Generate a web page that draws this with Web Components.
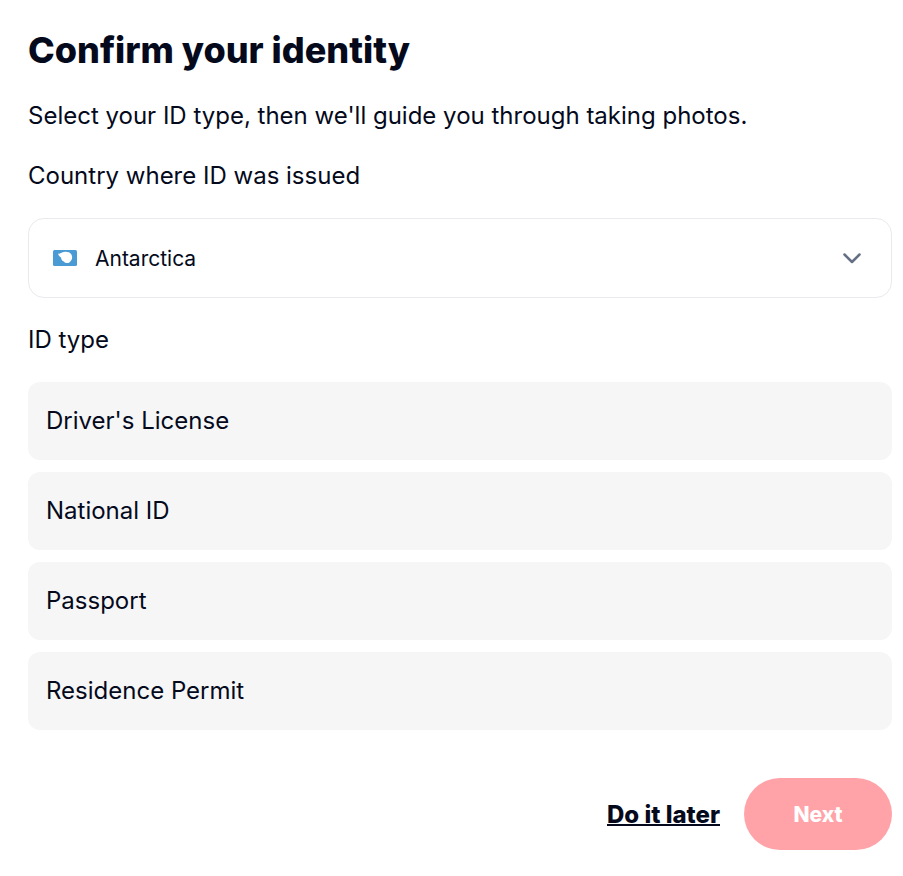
<!DOCTYPE html>
<html>
<head>
<meta charset="utf-8">
<style>
  html, body { margin: 0; background: #fff; }
  body { font-family: Inter, "Liberation Sans", sans-serif; color: #040a1c; }
</style>
</head>
<body>
<identity-page></identity-page>

<script>
// flag + name + chevron
var template_select = document.createElement("template");
template_select.innerHTML = `
<style>
  :host { display: flex; align-items: center; box-sizing: border-box; height: 80px; padding: 0 28px 0 24px; border: 1px solid #e8eaed; border-radius: 16px; background: #fff; font-size: 21px; }
  .flag { width: 24px; height: 16px; margin-right: 18px; flex: none; display: block; }
  .name { flex: 1; }
  .chev { width: 22px; height: 22px; display: block; }
</style>
<svg class="flag" viewBox="0 0 24 16">
  <rect width="24" height="16" rx="1.5" fill="#4a9bd4"/>
  <path fill="#ffffff" d="M5 3.6 C6.6 4 7.6 3 9 2.4 C12 1.2 16.4 1.6 18.2 4.2 C20 6.8 19.2 10.6 16.4 12.4 C14.4 13.6 12.2 13 10.8 11.4 C9.4 10.8 8 9.6 8.2 7.8 C7 6.8 5.4 5.4 5 3.6 Z"/>
</svg>
<span class="name"><slot></slot></span>
<svg class="chev" viewBox="0 0 22 22" fill="none" stroke="#667085" stroke-width="2.5" stroke-linecap="round" stroke-linejoin="round">
  <path d="M3.5 7.5 L11 15 L18.5 7.5"/>
</svg>
`;

class CountrySelect extends HTMLElement {
    constructor() {
        super();
        this.attachShadow({ mode: "open" });
    }
    connectedCallback() {
        this.shadowRoot.appendChild(template_select.content.cloneNode(true));
    }
}
customElements.define("country-select", CountrySelect);

var template_option = document.createElement("template");
template_option.innerHTML = `
<style>
  :host { display: flex; align-items: center; box-sizing: border-box; height: 78px; padding: 0 18px 2px; border-radius: 12px; background: #f6f6f7; font-size: 24px; }
</style>
<slot></slot>
`;

class IdOption extends HTMLElement {
    constructor() {
        super();
        this.attachShadow({ mode: "open" });
    }
    connectedCallback() {
        this.shadowRoot.appendChild(template_option.content.cloneNode(true));
    }
}
customElements.define("id-option", IdOption);

var template_page = document.createElement("template");
template_page.innerHTML = `
<style>
  :host { display: block; box-sizing: border-box; width: 903px; height: 876px; padding: 26px 11px 0 28px; }
  h1 { margin: 0; font-size: 36px; line-height: 48px; font-weight: 800; }
  p { margin: 0; font-size: 24px; line-height: 32px; }
  .intro { margin-top: 26px; }
  .country { margin-top: 28px; }
  country-select { margin-top: 26px; }
  .type { margin-top: 26px; }
  .list { display: flex; flex-direction: column; gap: 12px; margin-top: 26px; }
  .actions { display: flex; justify-content: flex-end; align-items: center; gap: 24px; margin-top: 48px; }
  .later { font-size: 24px; font-weight: 800; text-decoration: underline; text-decoration-thickness: 2px; }
  .next { display: flex; align-items: center; justify-content: center; width: 148px; height: 72px; border-radius: 36px; background: #ffa3a9; color: #fff; font-size: 21px; font-weight: 800; }
</style>
<h1>Confirm your identity</h1>
<p class="intro">Select your ID type, then we'll guide you through taking photos.</p>
<p class="country">Country where ID was issued</p>
<country-select>Antarctica</country-select>
<p class="type">ID type</p>
<div class="list">
  <id-option>Driver's License</id-option>
  <id-option>National ID</id-option>
  <id-option>Passport</id-option>
  <id-option>Residence Permit</id-option>
</div>
<div class="actions">
  <span class="later">Do it later</span>
  <span class="next">Next</span>
</div>
`;

class IdentityPage extends HTMLElement {
    constructor() {
        super();
        this.attachShadow({ mode: "open" });
    }
    connectedCallback() {
        this.shadowRoot.appendChild(template_page.content.cloneNode(true));
    }
}
customElements.define("identity-page", IdentityPage);
</script>
</body>
</html>
